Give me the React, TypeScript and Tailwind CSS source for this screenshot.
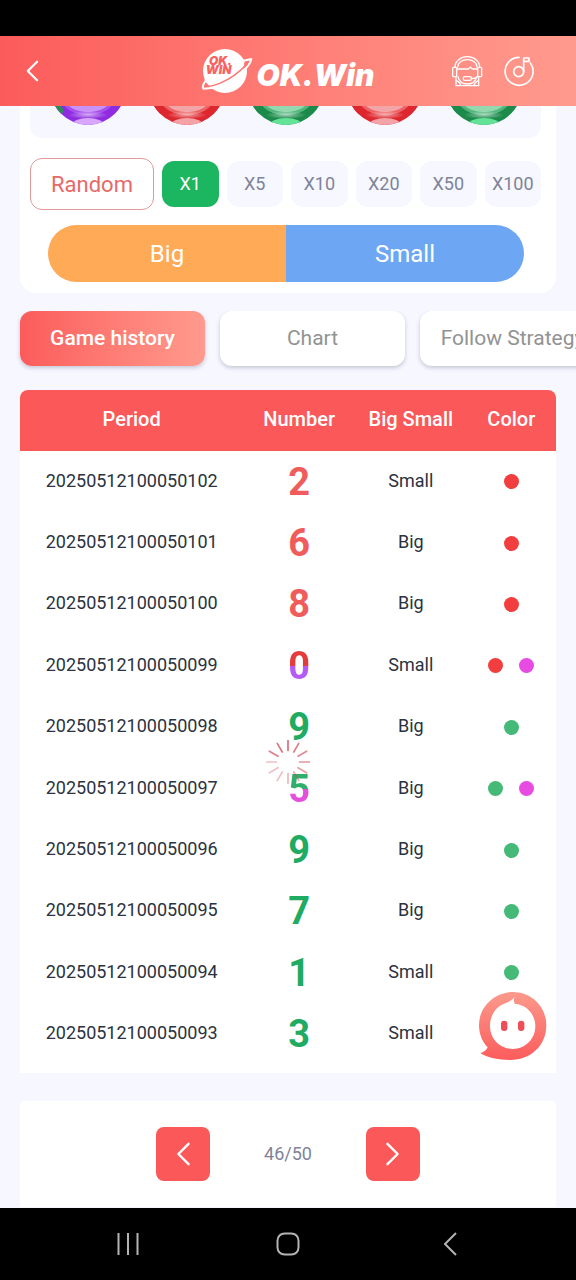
import React from "react";

type Tone = "red" | "green" | "redViolet" | "greenViolet";

const numberTone: Record<Tone, string> = {
  red: "text-[#f05c5c]",
  green: "text-[#1fab62]",
  redViolet:
    "bg-[linear-gradient(to_bottom,#e23c3c_50%,#b45cf5_50%)] bg-clip-text text-transparent",
  greenViolet:
    "bg-[linear-gradient(to_bottom,#2fae6c_50%,#e44fdc_50%)] bg-clip-text text-transparent",
};

const dotTone: Record<Tone, string[]> = {
  red: ["bg-[#f23e3e]"],
  green: ["bg-[#45b978]"],
  redViolet: ["bg-[#f23e3e]", "bg-[#e74be2]"],
  greenViolet: ["bg-[#45b978]", "bg-[#e74be2]"],
};

const rows: { period: string; number: number; size: string; tone: Tone }[] = [
  { period: "20250512100050102", number: 2, size: "Small", tone: "red" },
  { period: "20250512100050101", number: 6, size: "Big", tone: "red" },
  { period: "20250512100050100", number: 8, size: "Big", tone: "red" },
  { period: "20250512100050099", number: 0, size: "Small", tone: "redViolet" },
  { period: "20250512100050098", number: 9, size: "Big", tone: "green" },
  { period: "20250512100050097", number: 5, size: "Big", tone: "greenViolet" },
  { period: "20250512100050096", number: 9, size: "Big", tone: "green" },
  { period: "20250512100050095", number: 7, size: "Big", tone: "green" },
  { period: "20250512100050094", number: 1, size: "Small", tone: "green" },
  { period: "20250512100050093", number: 3, size: "Small", tone: "green" },
];

const balls = [
  { rim: "#8f2be0", mid: "#a850ec", inner: "#c892f6", shine: "#d9a6ff", edge: "#2f8a5a" },
  { rim: "#dd262d", mid: "#ee6466", inner: "#f1a5a7", shine: "#f5a3a6", edge: "#dd262d" },
  { rim: "#1c8a4b", mid: "#55b67e", inner: "#93d8ae", shine: "#62e396", edge: "#1c8a4b" },
  { rim: "#dd262d", mid: "#ee6466", inner: "#f1a5a7", shine: "#f5a3a6", edge: "#dd262d" },
  { rim: "#1c8a4b", mid: "#55b67e", inner: "#93d8ae", shine: "#62e396", edge: "#1c8a4b" },
];

function Ball({ ball, id }: { ball: (typeof balls)[number]; id: string }) {
  return (
    <svg width="76" height="19" viewBox="0 57 76 19" aria-hidden="true">
      <defs>
        <clipPath id={`${id}-clip`}>
          <circle cx="38" cy="38" r="38" />
        </clipPath>
        <radialGradient id={`${id}-glow`}>
          <stop offset="0" stopColor="#fff" stopOpacity="0.55" />
          <stop offset="1" stopColor="#fff" stopOpacity="0" />
        </radialGradient>
      </defs>
      <g clipPath={`url(#${id}-clip)`}>
        <rect width="76" height="76" fill={ball.rim} />
        <path d="M0 50H9L14 63L8 66Z" fill={ball.edge} />
        <ellipse cx="38" cy="50" rx="26" ry="16" fill={ball.mid} />
        <ellipse cx="38" cy="49" rx="23" ry="14" fill={ball.inner} />
        <ellipse cx="38" cy="66" rx="20" ry="4" fill={`url(#${id}-glow)`} />
        <ellipse cx="38" cy="76" rx="16" ry="7" fill={ball.shine} />
      </g>
    </svg>
  );
}

function Chevron({ dir, className }: { dir: "left" | "right"; className: string }) {
  return (
    <svg
      viewBox="0 0 16 26"
      className={className}
      fill="none"
      stroke="currentColor"
      strokeWidth="2.6"
      strokeLinecap="round"
      strokeLinejoin="round"
      aria-hidden="true"
    >
      <path d={dir === "left" ? "M14 2L3 13L14 24" : "M2 2L13 13L2 24"} />
    </svg>
  );
}

function Logo() {
  return (
    <div className="flex items-center gap-[3px] text-white">
      <svg width="52" height="48" viewBox="36 33 156 144" aria-hidden="true">
        <circle cx="108" cy="105" r="66" fill="#fff" />
        <path
          d="M160 75L187 69Q184 88 148 117Q98 158 43 158Q38 150 50 134"
          fill="none"
          stroke="#fff"
          strokeWidth="6"
          strokeLinejoin="round"
        />
        <path d="M166 78L181 75Q178 86 164 98Z" fill="#fd7470" />
        <path
          d="M46 150Q62 154 92 142Q138 124 176 82"
          fill="none"
          stroke="#fd7470"
          strokeWidth="4.5"
        />
        <g
          fill="#f9625f"
          fontFamily="Inter, sans-serif"
          fontWeight="900"
          fontStyle="italic"
          fontSize="36"
        >
          <text x="60" y="86">OK.</text>
          <text x="50" y="115">WIN</text>
        </g>
      </svg>
      <span className="pt-2 font-[Inter,sans-serif] text-[30px] leading-8 font-black italic">OK.Win</span>
    </div>
  );
}

function Header() {
  return (
    <header className="grid h-[70px] grid-cols-[1fr_auto_1fr] items-center bg-linear-to-r from-[#fb5b5b] to-[#ff9a8e] text-white">
      <button type="button" aria-label="Back" className="ml-6 w-4">
        <Chevron dir="left" className="h-5.5 w-4" />
      </button>
      <Logo />
      <div className="flex justify-end gap-5 pr-[41px]">
        <button type="button" aria-label="Customer service">
          <svg
            width="32"
            height="32"
            viewBox="63 57 96 96"
            fill="none"
            stroke="currentColor"
            strokeWidth="4"
            strokeLinejoin="round"
            strokeLinecap="round"
            aria-hidden="true"
          >
            <path d="M75 93A37 31 0 0 1 149 93" />
            <path d="M83 93A29 22 0 0 1 141 93" />
            <rect x="68" y="94" width="12" height="28" rx="3" />
            <rect x="143" y="94" width="12" height="28" rx="3" />
            <path d="M81 99H114Q117 99 119 95Q121 92 123 95Q125 99 129 99H142" />
            <path d="M84 122Q88 144 112 144Q136 144 140 122" />
            <path d="M78 125V149H146V125" />
            <path d="M79 134Q90 139 92 148M145 134Q134 139 132 148" />
            <rect x="100" y="122" width="24" height="11" rx="4" />
            <path d="M124 127Q134 129 142 122" />
          </svg>
        </button>
        <button type="button" aria-label="Music">
          <svg
            width="32"
            height="32"
            viewBox="220 57 96 96"
            fill="none"
            stroke="currentColor"
            strokeWidth="5"
            strokeLinejoin="round"
            strokeLinecap="round"
            aria-hidden="true"
          >
            <path d="M268 64A42 42 0 1 0 302 81" />
            <circle cx="267" cy="107" r="15" />
            <path d="M282 107V66H298V76H284" />
          </svg>
        </button>
      </div>
    </header>
  );
}

const multipliers = ["X1", "X5", "X10", "X20", "X50", "X100"];

function BetPanel() {
  return (
    <section className="mx-5 rounded-b-2xl bg-white pr-[15px] pb-[11px] pl-2.5">
      <div className="flex h-8 justify-around rounded-b-xl bg-[#f6f7ff] px-2">
        {balls.map((ball, i) => (
          <Ball key={i} ball={ball} id={`ball-${i}`} />
        ))}
      </div>
      <div className="mt-5 flex items-center gap-2">
        <button
          type="button"
          className="h-[52px] w-[124px] rounded-xl border border-[#e09a9a] text-[22px] text-[#e86868]"
        >
          Random
        </button>
        {multipliers.map((label, i) => (
          <button
            key={label}
            type="button"
            className={
              i === 0
                ? "h-[46px] min-w-0 flex-1 rounded-xl bg-[#1cb560] text-lg text-white"
                : "h-[46px] min-w-0 flex-1 rounded-xl bg-[#f6f7ff] text-lg text-[#7d8398]"
            }
          >
            {label}
          </button>
        ))}
      </div>
      <div className="mt-[15px] mr-[17px] ml-[18px] flex h-[57px] overflow-hidden rounded-full text-2xl text-white">
        <button type="button" className="flex-1 bg-[#feaa57]">
          Big
        </button>
        <button type="button" className="flex-1 bg-[#6da7f4]">
          Small
        </button>
      </div>
    </section>
  );
}

function Tabs() {
  return (
    <nav className="mt-[18px] flex gap-[15px] overflow-hidden pb-6 pl-5 text-[21px]">
      <button
        type="button"
        className="h-[55px] w-[185px] shrink-0 rounded-xl bg-linear-to-r from-[#fb5b5b] to-[#ff9a8e] font-medium text-white shadow-[0_2px_4px_#c5c7d6]"
      >
        Game history
      </button>
      <button
        type="button"
        className="h-[55px] w-[185px] shrink-0 rounded-xl bg-white text-[#929292] shadow-[0_2px_4px_#c5c7d6]"
      >
        Chart
      </button>
      <button
        type="button"
        className="h-[55px] w-[185px] shrink-0 rounded-xl bg-white whitespace-nowrap text-[#929292] shadow-[0_2px_4px_#c5c7d6]"
      >
        Follow Strategy
      </button>
    </nav>
  );
}

function Spinner() {
  return (
    <svg
      width="44"
      height="44"
      viewBox="-22 -22 44 44"
      className="absolute top-[350px] left-1/2 -translate-x-1/2"
      role="status"
      aria-label="Loading"
    >
      {Array.from({ length: 12 }, (_, i) => (
        <path
          key={i}
          d="M0 -11.5V-21.5"
          transform={`rotate(${-30 * i})`}
          stroke="#cf4a55"
          strokeWidth="1.7"
          strokeLinecap="round"
          opacity={i < 3 ? 0.8 - i * 0.05 : Math.max(0.28, 0.34 + Math.max(0, i - 5) * 0.06)}
        />
      ))}
    </svg>
  );
}

function ChatButton() {
  return (
    <button type="button" aria-label="Chat" className="absolute right-2 bottom-3">
      <svg width="70" height="70" viewBox="53 93 210 210" aria-hidden="true">
        <defs>
          <linearGradient id="chat" x1="0" y1="0" x2="0" y2="1">
            <stop offset="0" stopColor="#fc9a8c" />
            <stop offset="1" stopColor="#fb5c5c" />
          </linearGradient>
        </defs>
        <path
          d="M158 96C214 96 258 140 258 196C258 256 212 300 150 300C116 300 84 294 60 280C70 277 78 270 82 262C66 246 56 222 56 196C56 140 102 96 158 96Z"
          fill="url(#chat)"
        />
        <path
          d="M164 110C159 116 159 124 164 132C198 133 225 163 225 199C225 237 195 267 157 267C119 267 89 237 89 199C89 162 110 136 139 128C150 124 157 117 164 110Z"
          fill="#fff"
        />
        <rect x="122" y="182" width="19" height="31" rx="9" fill="#ef4d58" />
        <rect x="173" y="182" width="19" height="31" rx="9" fill="#ef4d58" />
      </svg>
    </button>
  );
}

function History() {
  return (
    <section className="relative mx-5 overflow-hidden rounded-t-lg bg-white pb-2">
      <table className="h-[675px] w-full table-fixed border-collapse text-center text-lg text-[#2b3240]">
        <colgroup>
          <col className="w-10/24" />
          <col className="w-5/24" />
          <col className="w-5/24" />
          <col className="w-4/24" />
        </colgroup>
        <thead>
          <tr className="h-[61px] bg-[#fa5859] text-xl text-white">
            <th className="pb-1 font-medium">Period</th>
            <th className="pb-1 font-medium">Number</th>
            <th className="pb-1 font-medium">Big Small</th>
            <th className="pb-1 font-medium">Color</th>
          </tr>
        </thead>
        <tbody>
          {rows.map((row) => (
            <tr key={row.period}>
              <td className="pb-0.5">{row.period}</td>
              <td>
                <span className={`inline-block align-middle text-[38px] leading-10 font-bold ${numberTone[row.tone]}`}>
                  {row.number}
                </span>
              </td>
              <td className="pb-0.5">{row.size}</td>
              <td>
                <span className="flex justify-center gap-4">
                  {dotTone[row.tone].map((dot) => (
                    <span key={dot} className={`size-[15px] rounded-full ${dot}`} />
                  ))}
                </span>
              </td>
            </tr>
          ))}
        </tbody>
      </table>
      <Spinner />
      <ChatButton />
    </section>
  );
}

function Pager() {
  return (
    <section className="mx-5 mt-7 flex items-center justify-center rounded-t-sm bg-white py-[26px]">
      <button
        type="button"
        aria-label="Previous page"
        className="flex size-[54px] items-center justify-center rounded-lg bg-[#fa5859] text-white"
      >
        <Chevron dir="left" className="h-6 w-4" />
      </button>
      <span className="w-39 text-center text-lg text-[#7d8398]">46/50</span>
      <button
        type="button"
        aria-label="Next page"
        className="flex size-[54px] items-center justify-center rounded-lg bg-[#fa5859] text-white"
      >
        <Chevron dir="right" className="h-6 w-4" />
      </button>
    </section>
  );
}

function SystemBar() {
  return (
    <footer className="grid h-18 grid-cols-3 place-items-center bg-black px-12 text-[#b4b4b4]">
      <button type="button" aria-label="Recent apps">
        <svg width="24" height="24" viewBox="0 0 24 24" stroke="currentColor" strokeWidth="2" aria-hidden="true">
          <path d="M2.5 1V23M12 1V23M21.5 1V23" />
        </svg>
      </button>
      <button type="button" aria-label="Home">
        <svg width="24" height="24" viewBox="0 0 24 24" fill="none" stroke="currentColor" strokeWidth="2" aria-hidden="true">
          <rect x="1.5" y="1.5" width="21" height="21" rx="7" />
        </svg>
      </button>
      <button type="button" aria-label="System back">
        <svg width="24" height="24" viewBox="0 0 24 24" fill="none" stroke="currentColor" strokeWidth="2" aria-hidden="true">
          <path d="M20 1L9 12L20 23" />
        </svg>
      </button>
    </footer>
  );
}

export default function App() {
  return (
    <div className="flex min-h-screen flex-col bg-[#f6f7ff] font-[Roboto,sans-serif]">
      <div className="h-9 bg-black" />
      <Header />
      <main className="flex-1">
        <BetPanel />
        <Tabs />
        <History />
        <Pager />
      </main>
      <SystemBar />
    </div>
  );
}
